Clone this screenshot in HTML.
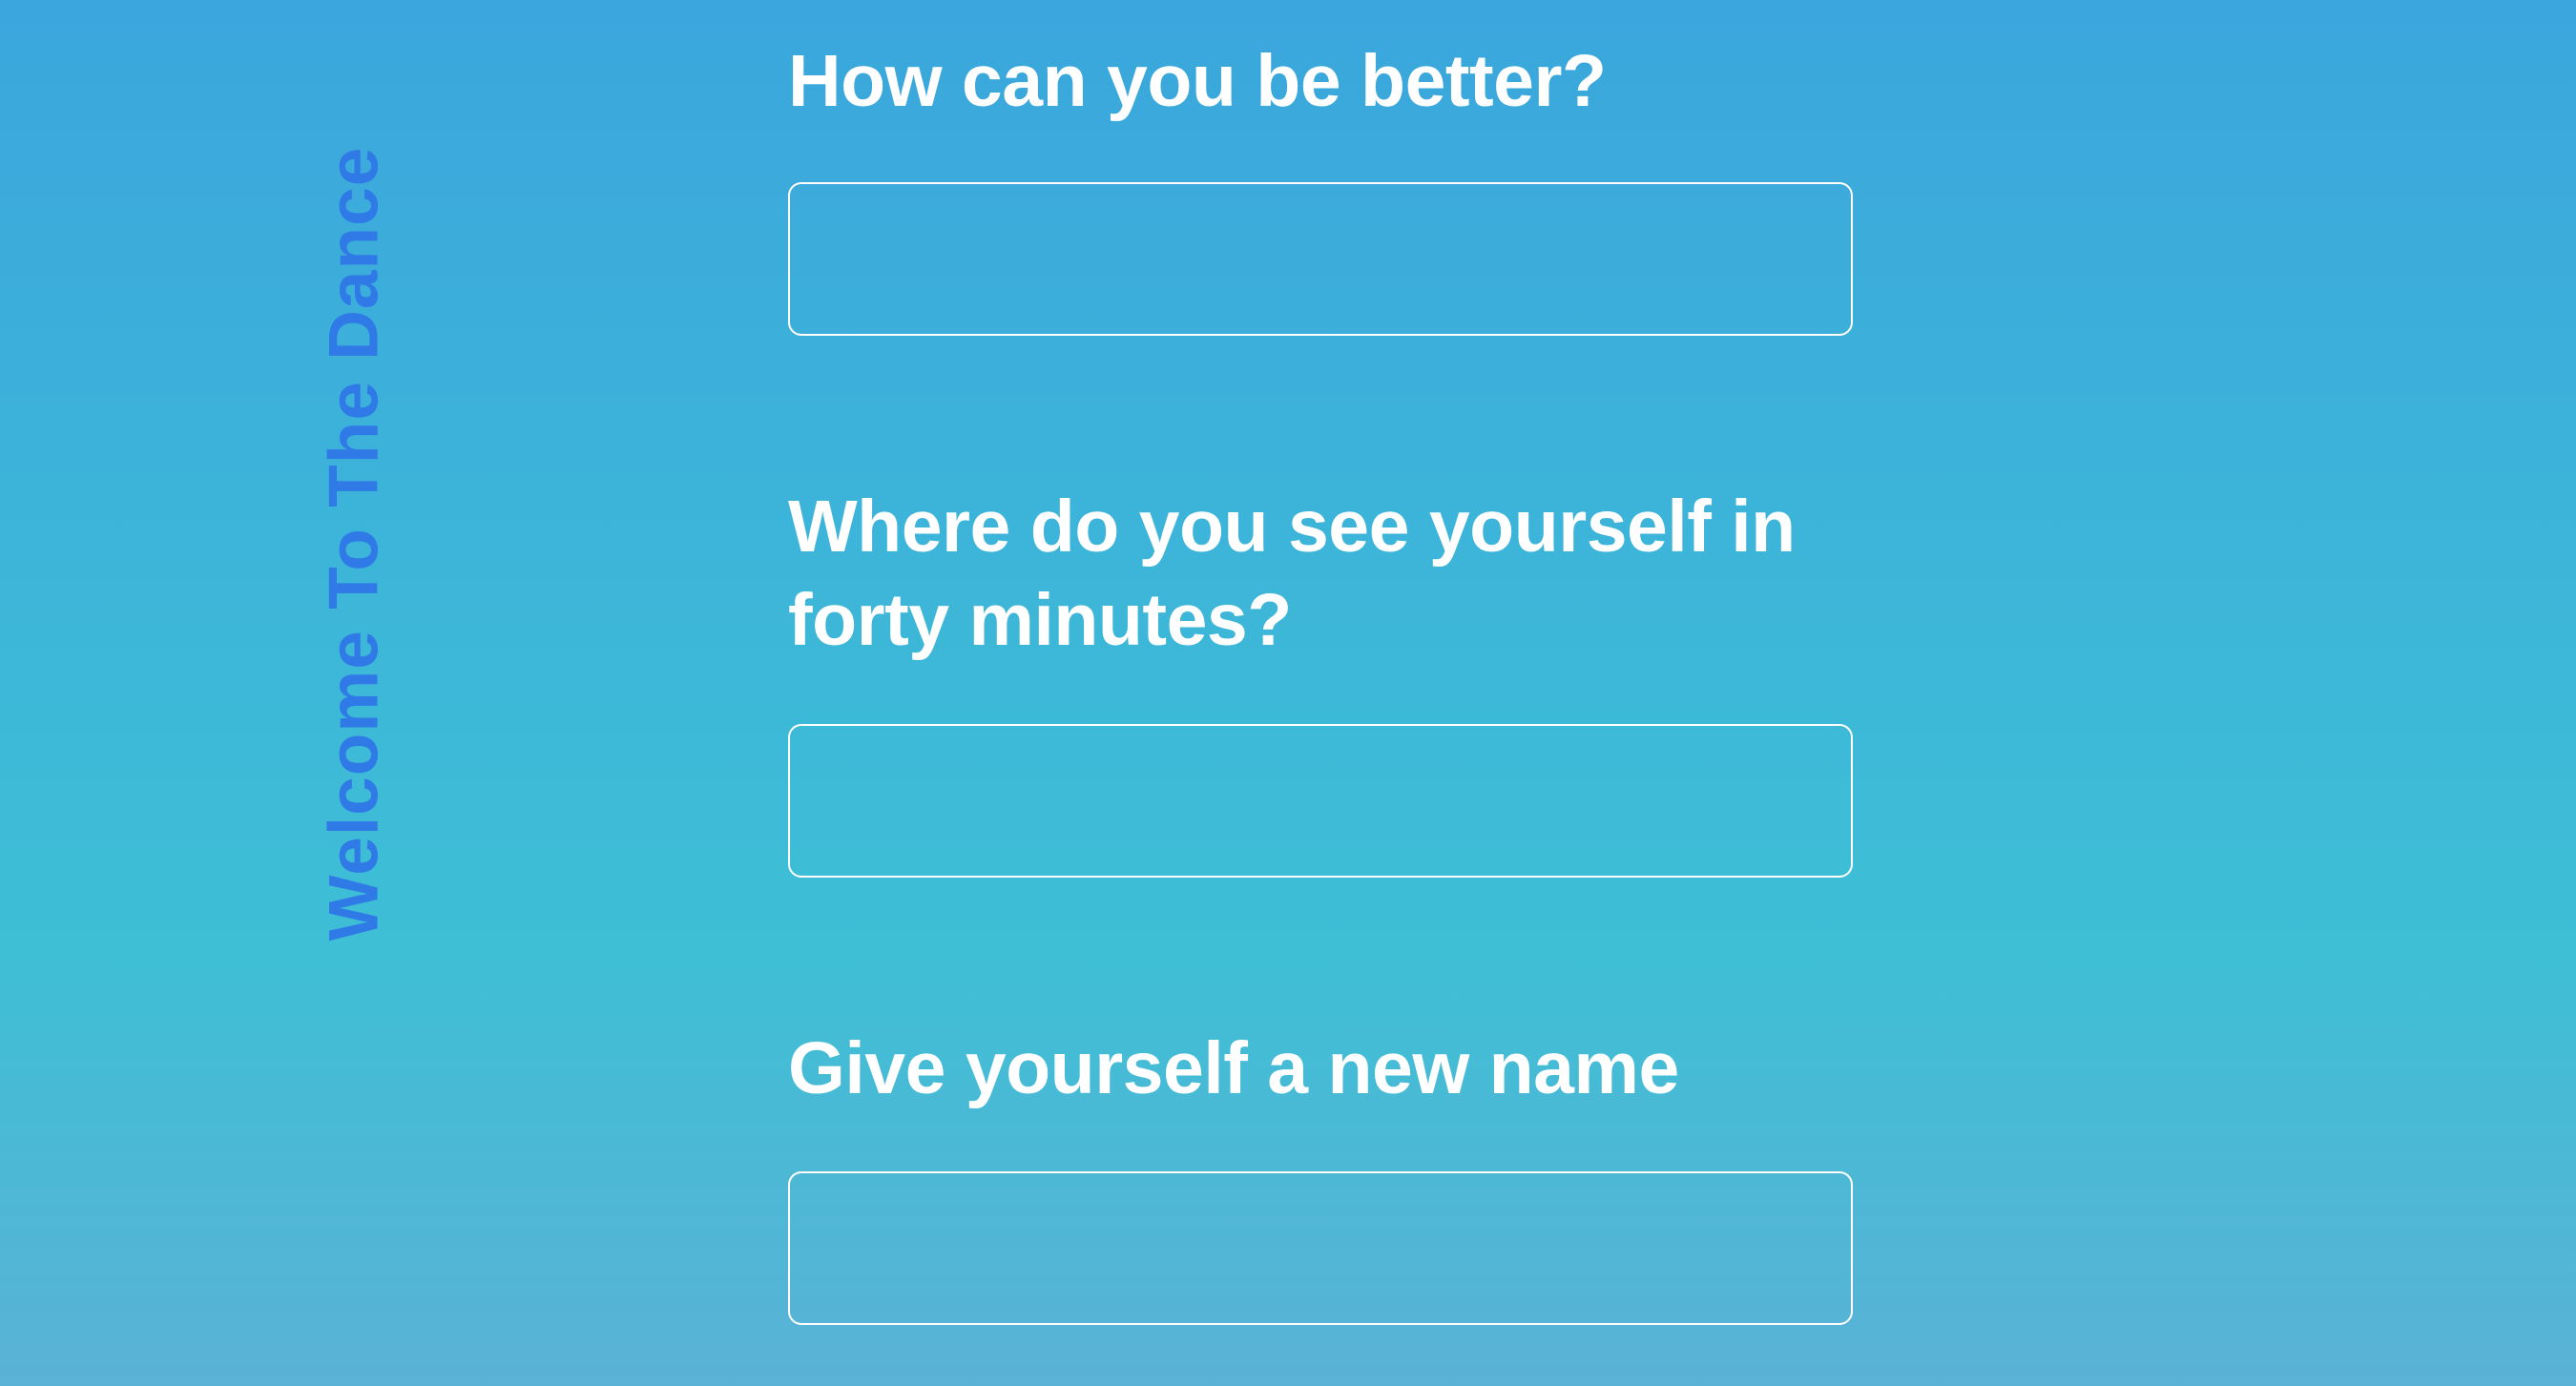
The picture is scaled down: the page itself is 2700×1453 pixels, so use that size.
<!DOCTYPE html>
<html><head><meta charset="utf-8"><style>
html,body{margin:0;padding:0;width:2700px;height:1453px;overflow:hidden}
body{background:linear-gradient(to bottom,#3ba6dd 0%,#3ebfd6 68%,#5ab2d6 100%);font-family:"Liberation Sans",sans-serif;position:relative}
h2{position:absolute;left:826px;margin:0;color:#fff;font-weight:bold;font-size:77px;line-height:98px;letter-spacing:-0.5px}
.box{position:absolute;left:826px;width:1112px;height:157px;border:2px solid #fff;border-radius:14px}
.v{position:absolute;left:371px;top:570px;transform:translate(-50%,-50%) rotate(-90deg);color:#2f7ae6;font-weight:bold;font-size:73px;white-space:nowrap;letter-spacing:1px}
</style></head><body>
<div class="v">Welcome To The Dance</div>
<h2 style="top:36px">How can you be better?</h2>
<div class="box" style="top:191px"></div>
<h2 style="top:503px">Where do you see yourself in<br>forty minutes?</h2>
<div class="box" style="top:759px"></div>
<h2 style="top:1071px">Give yourself a new name</h2>
<div class="box" style="top:1228px"></div>
</body></html>
